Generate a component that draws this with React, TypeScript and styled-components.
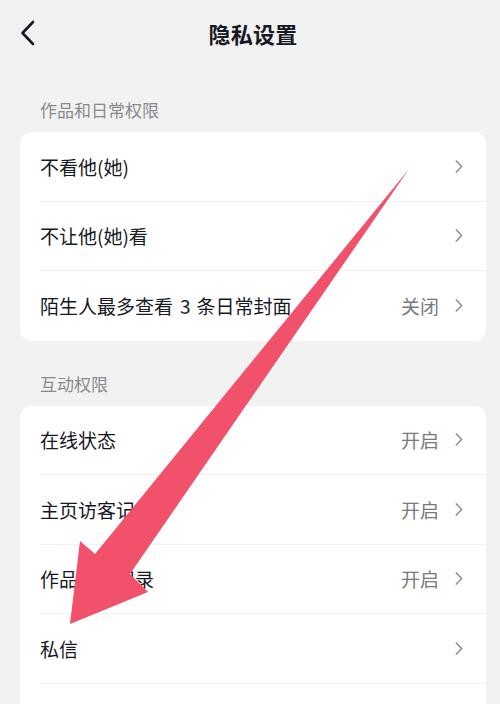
import React from "react";
import styled, { createGlobalStyle } from "styled-components";

const GlobalStyle = createGlobalStyle`
  html, body { margin: 0; padding: 0; background: #f2f2f2; }
  body { font-family: "Noto Sans CJK SC", "Noto Sans", sans-serif; }
  * { box-sizing: border-box; }
`;

const Page = styled.div`
  position: relative;
  width: 500px;
  min-height: 704px;
  background: #f2f2f2;
  overflow: hidden;
`;

const Header = styled.header`
  height: 66px;
  display: grid;
  grid-template-columns: 60px 1fr 60px;
  align-items: center;
  padding-left: 6px;
`;

const BackButton = styled.button`
  border: none;
  background: none;
  padding: 0 0 0 14px;
  height: 66px;
  display: flex;
  align-items: center;
  cursor: pointer;
`;

const Title = styled.h1`
  margin: 0;
  text-align: center;
  font-size: 22px;
  font-weight: 700;
  color: #161823;
  letter-spacing: 0.2px;
`;

const SectionTitle = styled.div<{ $top: number }>`
  padding: ${(p) => p.$top}px 40px 0;
  line-height: 44px;
  font-size: 17px;
  color: #8a8a8e;
`;

const Card = styled.div`
  margin: 0 14px 0 20px;
  background: #ffffff;
  border-radius: 12px;
  overflow: hidden;
`;

const Row = styled.div<{ $last?: boolean }>`
  height: 69.5px;
  margin-left: 20px;
  padding-right: 23px;
  display: flex;
  align-items: center;
  border-bottom: ${(p) => (p.$last ? "none" : "1px solid #f1f1f2")};
`;

const Label = styled.span`
  flex: 1;
  font-size: 19px;
  color: #161823;
  white-space: nowrap;
`;

const Num = styled.span`
  padding: 0 6px 0 7px;
`;

const Value = styled.span`
  font-size: 19px;
  color: #7a7a7e;
  margin-right: 16px;
`;

const ChevronWrap = styled.span`
  display: flex;
  align-items: center;
  width: 8px;
  height: 14px;
`;

const ArrowOverlay = styled.svg`
  position: absolute;
  left: 0;
  top: 0;
  width: 500px;
  height: 704px;
  pointer-events: none;
`;

const Chevron = () => (
  <ChevronWrap>
    <svg width="9" height="15" viewBox="0 0 9 15">
      <polyline
        points="1.5,1.2 7.5,7.5 1.5,13.8"
        fill="none"
        stroke="#8e8e92"
        strokeWidth="1.7"
        strokeLinecap="round"
        strokeLinejoin="round"
      />
    </svg>
  </ChevronWrap>
);

type Item = { key: string; label?: React.ReactNode; value?: string; bare?: boolean };

const section1: Item[] = [
  { key: "a", label: "不看他(她)" },
  { key: "b", label: "不让他(她)看" },
  {
    key: "c",
    label: (
      <>
        陌生人最多查看<Num>3</Num>条日常封面
      </>
    ),
    value: "关闭",
  },
];

const section2: Item[] = [
  { key: "d", label: "在线状态", value: "开启" },
  { key: "e", label: "主页访客记录", value: "开启" },
  { key: "f", label: "作品访客记录", value: "开启" },
  { key: "g", label: "私信" },
  { key: "h", bare: true },
];

const List = ({ items, open }: { items: Item[]; open?: boolean }) => (
  <Card>
    {items.map((it, i) => (
      <Row key={it.key} $last={!open && i === items.length - 1}>
        <Label>{it.label}</Label>
        {it.value && <Value>{it.value}</Value>}
        {!it.bare && <Chevron />}
      </Row>
    ))}
  </Card>
);

export default function App() {
  return (
    <>
      <GlobalStyle />
      <Page>
        <Header>
          <BackButton aria-label="返回">
            <svg width="16" height="26" viewBox="0 0 16 26">
              <polyline
                points="13,2 2.5,13 13,24"
                fill="none"
                stroke="#161823"
                strokeWidth="2.6"
                strokeLinecap="round"
                strokeLinejoin="round"
              />
            </svg>
          </BackButton>
          <Title>隐私设置</Title>
          <span />
        </Header>
        <SectionTitle $top={22}>作品和日常权限</SectionTitle>
        <List items={section1} />
        <SectionTitle $top={21}>互动权限</SectionTitle>
        <List items={section2} open />
        <ArrowOverlay viewBox="0 0 500 704">
          <polygon
            points="409,169 130,574 148,592 70,624 80,541 95,554"
            fill="#f1516a"
            strokeLinejoin="round"
          />
        </ArrowOverlay>
      </Page>
    </>
  );
}
